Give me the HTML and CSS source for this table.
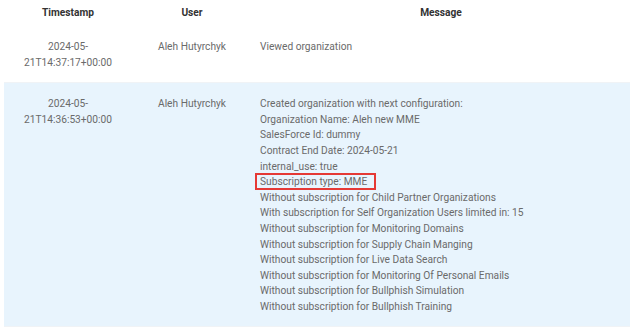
FILE: index.html
```html
<!DOCTYPE html>
<html lang="en">
<head>
  <meta charset="UTF-8" />
  <title>Audit log</title>
  <link rel="stylesheet" href="styles.css">
</head>
<body>
  <table class="log">
    <colgroup>
      <col class="col-time">
      <col class="col-user">
      <col class="col-msg">
    </colgroup>
    <thead>
      <tr><th>Timestamp</th><th>User</th><th>Message</th></tr>
    </thead>
    <tbody>
      <tr>
        <td class="time">2024-05-<br>21T14:37:17+00:00</td>
        <td class="user">Aleh Hutyrchyk</td>
        <td class="msg">Viewed organization</td>
      </tr>
      <tr class="active">
        <td class="time">2024-05-<br>21T14:36:53+00:00</td>
        <td class="user">Aleh Hutyrchyk</td>
        <td class="msg">
          <div>Created organization with next configuration:</div>
          <div>Organization Name: Aleh new MME</div>
          <div>SalesForce Id: dummy</div>
          <div>Contract End Date: 2024-05-21</div>
          <div>internal_use: true</div>
          <div><span class="mark">Subscription type: MME</span></div>
          <div>Without subscription for Child Partner Organizations</div>
          <div>With subscription for Self Organization Users limited in: 15</div>
          <div>Without subscription for Monitoring Domains</div>
          <div>Without subscription for Supply Chain Manging</div>
          <div>Without subscription for Live Data Search</div>
          <div>Without subscription for Monitoring Of Personal Emails</div>
          <div>Without subscription for Bullphish Simulation</div>
          <div>Without subscription for Bullphish Training</div>
        </td>
      </tr>
    </tbody>
  </table>
</body>
</html>
```

FILE: styles.css
```css
*,*::before,*::after{box-sizing:border-box;margin:0;padding:0}
body{background:#fff;font-family:Roboto,'Noto Sans',sans-serif;font-size:10.2px;color:#6a6a6a;overflow:hidden}
.log{margin-left:4px;width:626px;border-collapse:collapse;table-layout:fixed}
.col-time{width:128px}
.col-user{width:120px}
.log th{height:25px;font-weight:700;color:#333;text-align:center;vertical-align:middle}
.log td{vertical-align:top;line-height:15.6px;padding:13px 8px 11px}
.log tbody tr:first-child td{padding-top:14px;padding-bottom:12px}
.log td.time,.log td.user{text-align:center}
.log tbody tr{border-bottom:1px solid #f0f3f6}
.log tr.active{background:#e8f4fd}
.mark{border:2px solid #e53935;padding:1px 7px 1px 3px;margin-left:-5px}
```
